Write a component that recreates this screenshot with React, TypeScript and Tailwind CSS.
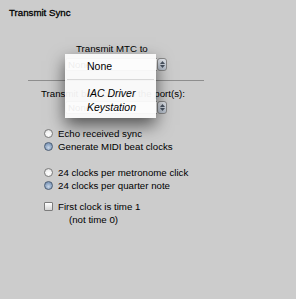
import React from "react";

function Stepper() {
  return (
    <div className="w-[10px] h-[13px] rounded-[3px] border border-[#8a8a8a] bg-gradient-to-b from-[#e4e8ee] to-[#b9c3d0] flex flex-col items-center justify-center gap-[1px]">
      <svg width="5" height="3" viewBox="0 0 5 3"><path d="M0 3 L2.5 0 L5 3 Z" fill="#4a5563" /></svg>
      <svg width="5" height="3" viewBox="0 0 5 3"><path d="M0 0 L2.5 3 L5 0 Z" fill="#4a5563" /></svg>
    </div>
  );
}

function PopupButton() {
  return (
    <div className="flex w-[102px] h-[13px]">
      <div className="flex-1 h-full border border-r-0 border-[#9a9a9a] bg-white rounded-l-[3px] pl-[2px] flex items-center text-[9.7px]">
        None
      </div>
      <Stepper />
    </div>
  );
}

function Radio({ on, label }: { on?: boolean; label: string }) {
  return (
    <div className="h-[13px] flex items-center gap-[5px] pl-[44px]">
      <div
        className={
          on
            ? "w-[9px] h-[9px] rounded-full border border-[#4d5e74] bg-[radial-gradient(circle_at_50%_65%,#c9d6e6_0%,#8ea6c4_55%,#6d86a8_100%)]"
            : "w-[9px] h-[9px] rounded-full border border-[#7c7c7c] bg-[radial-gradient(circle_at_50%_65%,#ffffff_0%,#f1f1f1_55%,#c9c9c9_100%)]"
        }
      />
      <span>{label}</span>
    </div>
  );
}

export default function App() {
  return (
    <div className="relative w-[296px] h-[299px] overflow-hidden bg-[#cccccc] text-black text-[9.7px] leading-[12px] font-['Liberation_Sans',Arial,sans-serif]">
      <div className="pl-[9px] pt-[7px] [-webkit-text-stroke:0.3px_black]">Transmit Sync</div>

      <div className="flex flex-col items-start pl-[65px] mt-[24px]">
        <div className="pl-[11px]">Transmit MTC to</div>
        <div className="mt-[3px]">
          <PopupButton />
        </div>
      </div>

      <div className="ml-[28px] mt-[9px] w-[176px] h-px bg-[#8e8e8e]" />

      <div className="pl-[41px] mt-[7px]">Transmit beat clock to the port(s):</div>
      <div className="pl-[65px] mt-[1px]">
        <PopupButton />
      </div>

      <div className="mt-[13px]">
        <Radio label="Echo received sync" />
        <Radio on label="Generate MIDI beat clocks" />
      </div>
      <div className="mt-[13px]">
        <Radio label="24 clocks per metronome click" />
        <Radio on label="24 clocks per quarter note" />
      </div>
      <div className="mt-[8px]">
        <div className="h-[13px] flex items-center gap-[5px] pl-[44px]">
          <div className="w-[9px] h-[9px] rounded-[1px] border border-[#7c7c7c] bg-gradient-to-b from-[#ffffff] to-[#d4d4d4]" />
          <span>First clock is time 1</span>
        </div>
        <div className="h-[13px] flex items-center pl-[69px]">(not time 0)</div>
      </div>

      <div className="absolute left-[65px] top-[54px] w-[91px] h-[64px] bg-[rgba(252,252,252,0.94)] shadow-[0_7px_16px_rgba(0,0,0,0.6)] pt-[5px] text-[10.5px]">
        <div className="h-[14px] flex items-center pl-[22px]">None</div>
        <div className="h-[12px] flex items-center px-[2px]">
          <div className="w-full h-px bg-[#d8d8d8]" />
        </div>
        <div className="h-[1px]" />
        <div className="h-[14px] flex items-center pl-[22px] italic">IAC Driver</div>
        <div className="h-[14px] flex items-center pl-[22px] italic">Keystation</div>
      </div>
    </div>
  );
}
